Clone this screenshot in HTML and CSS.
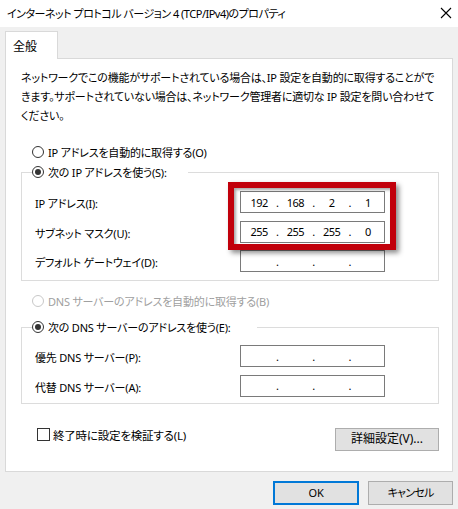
FILE: index.html
```html
<!DOCTYPE html>
<html lang="ja">
<head>
<meta charset="utf-8">
<title>インターネット プロトコル バージョン 4 (TCP/IPv4)のプロパティ</title>
<link rel="stylesheet" href="styles.css">
</head>
<body>
<div class="window">
  <header class="titlebar">
    <span class="title">インターネット プロトコル バージョン 4 (TCP/IPv4)のプロパティ</span>
    <svg class="close" width="12" height="12" viewBox="0 0 12 12"><path d="M1 1L11 11M11 1L1 11" stroke="#000" stroke-width="1.1" fill="none"/></svg>
  </header>
  <div class="content">
    <div class="tabs"><div class="tab">全般</div></div>
    <div class="panel">
      <p class="desc">ネットワークでこの機能がサポートされている場合は、IP 設定を自動的に取得することがで<br>きます。サポートされていない場合は、ネットワーク管理者に適切な IP 設定を問い合わせて<br>ください。</p>
      <div class="option option-first"><span class="radio"></span>IP アドレスを自動的に取得する(O)</div>
      <fieldset class="group group-ip">
        <legend class="legend legend-ip"><span class="radio checked"></span>次の IP アドレスを使う(S):</legend>
        <div class="row"><span class="label">IP アドレス(I):</span><div class="ipbox"><span class="oct">192</span><span class="dot">.</span><span class="oct">168</span><span class="dot">.</span><span class="oct">2</span><span class="dot">.</span><span class="oct">1</span></div></div>
        <div class="row"><span class="label">サブネット マスク(U):</span><div class="ipbox"><span class="oct">255</span><span class="dot">.</span><span class="oct">255</span><span class="dot">.</span><span class="oct">255</span><span class="dot">.</span><span class="oct">0</span></div></div>
        <div class="row"><span class="label">デフォルト ゲートウェイ(D):</span><div class="ipbox"><span class="oct"></span><span class="dot">.</span><span class="oct"></span><span class="dot">.</span><span class="oct"></span><span class="dot">.</span><span class="oct"></span></div></div>
      </fieldset>
      <div class="option option-dns disabled"><span class="radio"></span>DNS サーバーのアドレスを自動的に取得する(B)</div>
      <fieldset class="group group-dns">
        <legend class="legend legend-dns"><span class="radio checked"></span>次の DNS サーバーのアドレスを使う(E):</legend>
        <div class="row"><span class="label">優先 DNS サーバー(P):</span><div class="ipbox"><span class="oct"></span><span class="dot">.</span><span class="oct"></span><span class="dot">.</span><span class="oct"></span><span class="dot">.</span><span class="oct"></span></div></div>
        <div class="row"><span class="label">代替 DNS サーバー(A):</span><div class="ipbox"><span class="oct"></span><span class="dot">.</span><span class="oct"></span><span class="dot">.</span><span class="oct"></span><span class="dot">.</span><span class="oct"></span></div></div>
      </fieldset>
      <div class="footer-row">
        <div class="check-line"><span class="checkbox"></span>終了時に設定を検証する(L)</div>
        <button class="btn btn-adv">詳細設定(V)...</button>
      </div>
    </div>
    <div class="buttons">
      <button class="btn btn-ok">OK</button>
      <button class="btn btn-cancel">キャンセル</button>
    </div>
  </div>
  <div class="highlight"></div>
</div>
</body>
</html>
```
FILE: styles.css
```css
* { box-sizing: border-box; }
html, body { margin: 0; padding: 0; }
body {
  background: #f0f0f0;
  font-family: "Noto Sans", "Noto Sans CJK JP", sans-serif;
  font-size: 11px;
  letter-spacing: -0.2px;
  color: #000;
  font-feature-settings: "palt";
}
.window { position: relative; width: 458px; height: 509px; }
.titlebar {
  height: 27px;
  background: #fff;
  display: flex;
  align-items: center;
  justify-content: space-between;
  padding: 0 6px 0 7px;
}
.title { line-height: 16px; letter-spacing: -0.5px; }
.close { display: block; margin-top: -1px; }
.content { padding: 4px 0 0 5px; }
.tabs { display: flex; }
.tab {
  position: relative;
  z-index: 1;
  width: 53px;
  height: 28px;
  margin-bottom: -1px;
  background: #fff;
  border: 1px solid #d9d9d9;
  border-bottom: none;
  padding: 7px 0 0 7px;
  line-height: 16px;
  font-size: 12px;
  letter-spacing: 0;
}
.panel {
  width: 448px;
  height: 414px;
  background: #fff;
  border: 1px solid #d9d9d9;
  padding: 9px 13px 0 15px;
}
.desc { margin: 0; line-height: 19px; white-space: nowrap; }
.option {
  display: flex;
  align-items: center;
  height: 20px;
  padding-left: 11px;
}
.option-first { margin-top: 17px; }
.option-dns { margin-top: 10px; }
.disabled { color: #a0a0a0; }
.radio {
  display: inline-block;
  width: 12px;
  height: 12px;
  border: 1px solid #333;
  border-radius: 50%;
  margin-right: 4px;
  position: relative;
  flex: none;
}
.disabled .radio { border-color: #c8c8c8; }
.radio.checked::after {
  content: "";
  position: absolute;
  left: 2px; top: 2px;
  width: 6px; height: 6px;
  border-radius: 50%;
  background: #333;
}
.group {
  margin: 0;
  border: 1px solid #dcdcdc;
  padding: 9px 0 8px 13px;
  min-width: 0;
}
.group-dns { margin-top: 6px; padding-top: 8px; padding-bottom: 6px; }
.legend {
  display: flex;
  align-items: center;
  height: 20px;
  padding: 0;
  margin-left: -3px;
}
.legend-ip { width: 156px; }
.legend-dns { width: 225px; }
.row {
  display: flex;
  align-items: center;
  height: 22px;
}
.row + .row { margin-top: 7.5px; }
.label { width: 205px; flex: none; padding-top: 2px; }
.ipbox {
  width: 145px;
  height: 22px;
  border: 1px solid #7a7a7a;
  display: flex;
  align-items: center;
  padding-left: 2px;
  letter-spacing: -0.6px;
}
.oct { flex: 1; text-align: center; }
.dot { width: 4px; text-align: center; }
.footer-row {
  display: flex;
  justify-content: space-between;
  align-items: flex-start;
  margin-top: 21px;
}
.check-line {
  display: flex;
  align-items: center;
  height: 20px;
  padding-left: 16px;
  font-size: 11.5px;
}
.checkbox {
  width: 13px; height: 13px;
  border: 1px solid #333;
  margin-right: 3px;
  flex: none;
}
.btn {
  font: inherit;
  font-feature-settings: "palt";
  letter-spacing: inherit;
  color: #000;
  background: #e1e1e1;
  border: 1px solid #adadad;
  border-radius: 0;
  padding: 0;
  height: 24px;
  line-height: 20px;
}
.btn-adv { width: 104px; height: 23px; margin-top: 3px; font-size: 12px; letter-spacing: 0; }
.buttons {
  display: flex;
  justify-content: flex-end;
  gap: 9px;
  margin-top: 9px;
  padding-right: 5px;
}
.btn-ok { width: 86px; border: 2px solid #0078d7; }
.btn-cancel { width: 85px; letter-spacing: -0.8px; }
.highlight {
  position: absolute;
  left: 228px; top: 182px;
  width: 168px; height: 68px;
  border: 6px solid #c1000b;
  box-shadow: 3px 3px 5px rgba(0,0,0,0.45), inset 2px 2px 3px rgba(0,0,0,0.35);
  pointer-events: none;
}
```
